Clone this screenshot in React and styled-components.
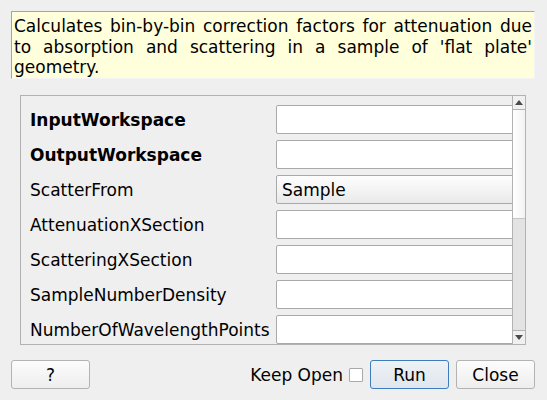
import React from "react";
import styled, { createGlobalStyle } from "styled-components";

const Global = createGlobalStyle`
  html, body { margin: 0; padding: 0; background: #efefef; }
  body { font-family: "DejaVu Sans", "Noto Sans", sans-serif; font-size: 17px; color: #000; }
  * { box-sizing: border-box; }
`;

const Page = styled.div`
  width: 547px;
  height: 400px;
  display: flex;
  flex-direction: column;
  padding: 11px 12px 11px 11px;
`;

const Description = styled.div`
  height: 68px;
  background: #ffffdc;
  border-top: 1px solid #a4a4a4;
  border-left: 1px solid #a4a4a4;
  border-right: 1px solid #f4f4f4;
  border-bottom: 1px solid #f4f4f4;
  padding: 4px 2px 2px 2px;
  line-height: 20.5px;
  text-align: justify;
  text-align-last: left;
`;

const Frame = styled.div`
  margin: 16px 9px 0 9px;
  height: 250px;
  border: 1px solid #b2b2b2;
  display: flex;
`;

const Viewport = styled.div`
  flex: 1;
  overflow: hidden;
`;

const Form = styled.div`
  width: 520px;
  padding: 9px 0 0 9px;
  display: grid;
  grid-template-columns: 246px 1fr;
  grid-auto-rows: 29px;
  row-gap: 6px;
`;

const Label = styled.div`
  display: flex;
  align-items: center;
  font-weight: ${(p) => (p.$bold ? "bold" : "normal")};
  white-space: nowrap;
`;

const Field = styled.div`
  border: 1px solid #a9a9a9;
  border-radius: 2px;
  background: ${(p) =>
    p.$combo ? "linear-gradient(#fdfdfd, #f2f2f2 60%, #e9e9e9)" : "#ffffff"};
  display: flex;
  align-items: center;
  padding-left: 5px;
`;

const ScrollBar = styled.div`
  width: 13px;
  border-left: 1px solid #b2b2b2;
  display: flex;
  flex-direction: column;
  background: #e3e3e3;
`;

const ArrowBox = styled.div`
  height: 14px;
  display: flex;
  align-items: center;
  justify-content: center;
  background: #f0f0f0;
  border-bottom: ${(p) => (p.$top ? "1px solid #b2b2b2" : "none")};
  border-top: ${(p) => (p.$top ? "none" : "1px solid #b2b2b2")};
`;

const Handle = styled.div`
  height: 109px;
  background: linear-gradient(90deg, #ffffff, #f3f3f3);
  border-bottom: 1px solid #c4c4c4;
`;

const Groove = styled.div`
  flex: 1;
`;

const Footer = styled.div`
  margin-top: 15px;
  height: 29px;
  display: flex;
  align-items: center;
`;

const Button = styled.button`
  font: inherit;
  color: #000;
  width: 79px;
  height: 29px;
  padding: 0;
  border-radius: 3px;
  border: 1px solid ${(p) => (p.$default ? "#3d7dbd" : "#b3b3b3")};
  background: ${(p) =>
    p.$default
      ? "linear-gradient(#eef2f6, #dfe6ed)"
      : "linear-gradient(#fcfcfc, #eeeeee)"};
  margin-left: ${(p) => p.$ml || 0}px;
`;

const Spacer = styled.div`
  flex: 1;
`;

const KeepLabel = styled.span`
  white-space: nowrap;
`;

const Check = styled.span`
  width: 14px;
  height: 14px;
  margin-left: 6px;
  background: #fff;
  border: 1px solid #a9a9a9;
  border-radius: 1px;
`;

function Arrow({ up }) {
  return (
    <svg width="8" height="5" viewBox="0 0 8 5">
      <polygon
        points={up ? "0,5 8,5 4,0" : "0,0 8,0 4,5"}
        fill="#4a4a4a"
      />
    </svg>
  );
}

const rows = [
  { label: "InputWorkspace", bold: true },
  { label: "OutputWorkspace", bold: true },
  { label: "ScatterFrom", combo: true, value: "Sample" },
  { label: "AttenuationXSection" },
  { label: "ScatteringXSection" },
  { label: "SampleNumberDensity" },
  { label: "NumberOfWavelengthPoints" },
];

export default function App() {
  return (
    <>
      <Global />
      <Page>
        <Description>
          Calculates bin-by-bin correction factors for attenuation due to
          absorption and scattering in a sample of 'flat plate' geometry.
        </Description>
        <Frame>
          <Viewport>
            <Form>
              {rows.map((r) => (
                <React.Fragment key={r.label}>
                  <Label $bold={r.bold}>{r.label}</Label>
                  <Field $combo={r.combo}>{r.value || ""}</Field>
                </React.Fragment>
              ))}
            </Form>
          </Viewport>
          <ScrollBar>
            <ArrowBox $top>
              <Arrow up />
            </ArrowBox>
            <Handle />
            <Groove />
            <ArrowBox>
              <Arrow />
            </ArrowBox>
          </ScrollBar>
        </Frame>
        <Footer>
          <Button>?</Button>
          <Spacer />
          <KeepLabel>Keep Open</KeepLabel>
          <Check />
          <Button $default $ml={7}>Run</Button>
          <Button $ml={7}>Close</Button>
        </Footer>
      </Page>
    </>
  );
}
